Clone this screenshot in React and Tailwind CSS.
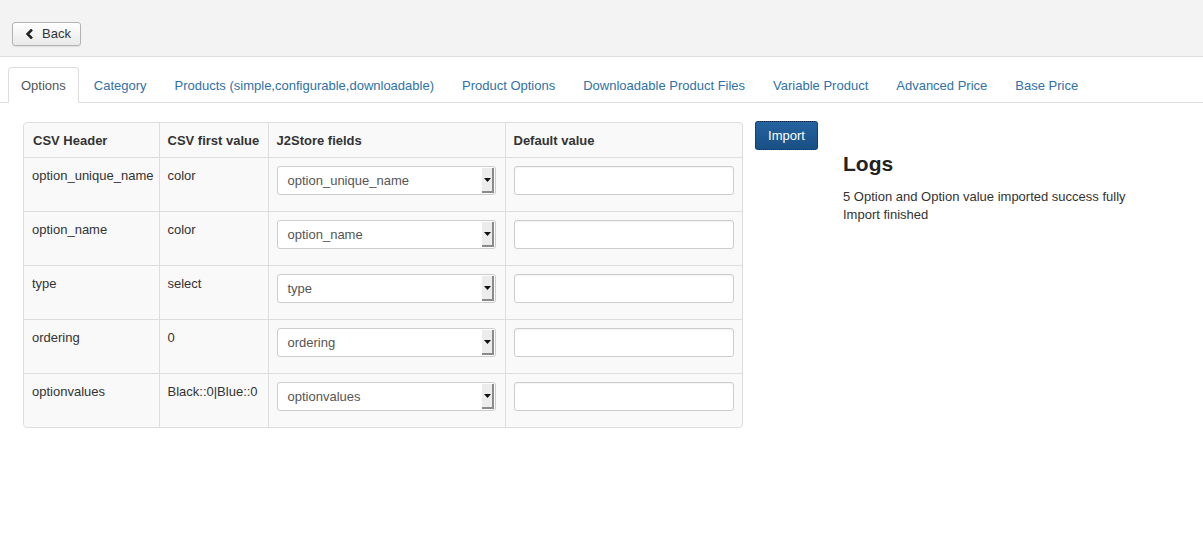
import React from "react";

const tabs = [
  "Options",
  "Category",
  "Products (simple,configurable,downloadable)",
  "Product Options",
  "Downloadable Product Files",
  "Variable Product",
  "Advanced Price",
  "Base Price",
];

const rows = [
  ["option_unique_name", "color", "option_unique_name"],
  ["option_name", "color", "option_name"],
  ["type", "select", "type"],
  ["ordering", "0", "ordering"],
  ["optionvalues", "Black::0|Blue::0", "optionvalues"],
];

function Select({ value }) {
  return (
    <div className="flex h-[29px] w-[219px] items-stretch rounded-[3px] border border-[#ccc] bg-white">
      <div className="flex flex-1 items-center pl-[10px] pt-[1px] text-[13px] text-[#555]">{value}</div>
      <div className="my-[1px] mr-[1px] flex w-[12px] items-center justify-center bg-[#ececec] shadow-[inset_-2px_-2px_0_#8a8a8a]">
        <svg width="7" height="4" viewBox="0 0 7 4" className="-mt-[1px] -ml-[1px]">
          <path d="M0 0h7L3.5 4z" fill="#111" />
        </svg>
      </div>
    </div>
  );
}

export default function App() {
  return (
    <div className="min-h-[538px] bg-white font-['Liberation_Sans',Arial,sans-serif] text-[13px] text-[#333]">
      <div className="h-[57px] border-b border-[#dcdcdc] bg-[#f3f3f3] pl-[12px] pt-[22px]">
        <button className="flex h-[24px] w-[69px] items-center gap-[8px] rounded-[3px] border border-[#b3b3b3] bg-gradient-to-b from-[#ffffff] to-[#e9e9e9] pl-[13px] text-[13px] text-[#333] shadow-[0_1px_1px_rgba(0,0,0,0.08)]">
          <svg width="8" height="10" viewBox="0 0 8 10">
            <path d="M6 0.5L1.5 5L6 9.5" stroke="#222" strokeWidth="2.6" fill="none" strokeLinejoin="miter" />
          </svg>
          <span>Back</span>
        </button>
      </div>

      <div className="mt-[10px] flex border-b border-[#ddd] pl-[8px]">
        {tabs.map((t, i) => (
          <div
            key={t}
            className={
              i === 0
                ? "-mb-px mr-[2px] flex h-[36px] items-center rounded-t-[4px] border border-[#ddd] border-b-white bg-white px-[12px] pt-[1px] text-[#555]"
                : "-mb-px mr-[2px] flex h-[36px] items-center border border-transparent px-[12px] pt-[1px] text-[#3071a9]"
            }
          >
            {t}
          </div>
        ))}
      </div>

      <div className="flex pl-[23px] pt-[19px]">
        <div className="w-[720px] overflow-hidden rounded-[4px] border border-[#ddd] bg-[#f9f9f9]">
          <table className="w-full table-fixed border-collapse text-left">
            <colgroup>
              <col className="w-[135px]" />
              <col className="w-[109px]" />
              <col className="w-[237px]" />
              <col />
            </colgroup>
            <thead>
              <tr className="h-[34px]">
                <th className="whitespace-nowrap px-[9px] pt-[1px] font-bold">CSV Header</th>
                <th className="whitespace-nowrap border-l border-[#ddd] px-[8px] pt-[1px] font-bold">CSV first value</th>
                <th className="whitespace-nowrap border-l border-[#ddd] px-[8px] pt-[1px] font-bold">J2Store fields</th>
                <th className="whitespace-nowrap border-l border-[#ddd] px-[8px] pt-[1px] font-bold">Default value</th>
              </tr>
            </thead>
            <tbody>
              {rows.map((r) => (
                <tr key={r[0]} className="h-[54px] border-t border-[#ddd]">
                  <td className="whitespace-nowrap px-[8px] pt-[8px] align-top">{r[0]}</td>
                  <td className="whitespace-nowrap border-l border-[#ddd] px-[8px] pt-[8px] align-top">{r[1]}</td>
                  <td className="border-l border-[#ddd] px-[8px] pt-[8px] align-top">
                    <Select value={r[2]} />
                  </td>
                  <td className="border-l border-[#ddd] px-[8px] pt-[8px] align-top">
                    <div className="h-[29px] w-[220px] rounded-[3px] border border-[#ccc] bg-white shadow-[inset_0_1px_1px_rgba(0,0,0,0.05)]" />
                  </td>
                </tr>
              ))}
            </tbody>
          </table>
        </div>

        <div className="ml-[12px] -mt-[1px]">
          <button className="h-[29px] w-[63px] rounded-[3px] border border-dotted border-[#0d2a4a] bg-gradient-to-b from-[#24639f] to-[#1a4f84] text-[13px] text-white">
            Import
          </button>
        </div>

        <div className="ml-[25px] pt-[28px]">
          <h2 className="text-[21px] font-bold leading-[28px] text-[#222]">Logs</h2>
          <div className="mt-[10px] leading-[18px]">
            <div>5 Option and Option value imported success fully</div>
            <div>Import finished</div>
          </div>
        </div>
      </div>
    </div>
  );
}
